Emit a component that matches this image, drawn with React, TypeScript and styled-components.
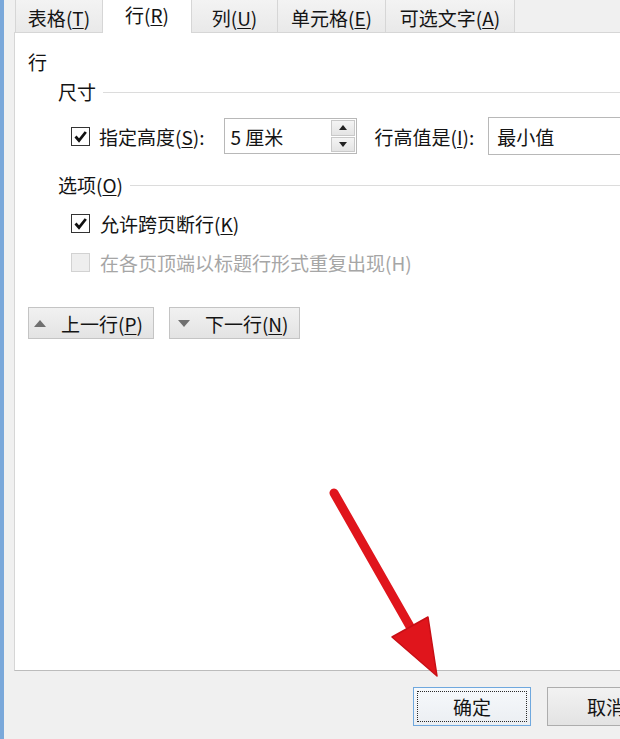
import styled, { createGlobalStyle } from 'styled-components';

const GlobalStyle = createGlobalStyle`
  html, body {
    margin: 0;
    padding: 0;
    background: #f0f0f0;
  }
  body {
    font-family: 'Noto Sans CJK SC', 'Noto Sans', sans-serif;
    color: #141414;
    overflow: hidden;
  }
  u {
    text-underline-offset: 2px;
  }
`;

const Screen = styled.div`
  position: relative;
  width: 620px;
  height: 739px;
  overflow: hidden;
  display: flex;
`;

const WindowEdge = styled.div`
  width: 4px;
  flex-shrink: 0;
  background: #7aa8da;
`;

const Dialog = styled.div`
  width: 720px;
  flex-shrink: 0;
  padding-left: 10px;
  display: flex;
  flex-direction: column;
  background: #f0f0f0;
`;

const TabStrip = styled.div`
  display: flex;
  align-items: flex-start;
  height: 32px;
  padding-left: 2px;
  position: relative;
  z-index: 2;
`;

const Tab = styled.div<{ $active?: boolean; $width: number }>`
  box-sizing: border-box;
  height: ${(p) => (p.$active ? 33 : 32)}px;
  width: ${(p) => p.$width}px;
  margin-left: -1px;
  padding-bottom: ${(p) => (p.$active ? 5 : 0)}px;
  padding-top: ${(p) => (p.$active ? 0 : 2)}px;
  display: flex;
  align-items: center;
  justify-content: center;
  font-size: 19px;
  line-height: 1;
  white-space: nowrap;
  border: 1px solid #d6d6d6;
  border-top: none;
  border-bottom: none;
  background: ${(p) => (p.$active ? '#ffffff' : 'linear-gradient(#f3f3f3, #e9e9e9)')};
`;

const Panel = styled.div`
  box-sizing: border-box;
  height: 639px;
  background: #ffffff;
  border: 1px solid #d6d6d6;
  border-bottom-color: #bcbcbc;
  border-right: none;
  padding: 17px 0 0 13px;
  display: flex;
  flex-direction: column;
  align-items: flex-start;
`;

const SectionTitle = styled.div`
  font-size: 19px;
  line-height: 24px;
`;

const GroupHeader = styled.div<{ $top: number }>`
  align-self: stretch;
  display: flex;
  align-items: center;
  gap: 7px;
  margin: ${(p) => p.$top}px 0 0 30px;
  font-size: 19px;
  line-height: 24px;

  &::after {
    content: '';
    flex: 1;
    height: 1px;
    background: #dcdcdc;
  }
`;

const SizeRow = styled.div`
  display: flex;
  align-items: center;
  height: 38px;
  margin: 13px 0 0 43px;
  font-size: 19px;
  white-space: nowrap;
`;

const CheckRow = styled.div<{ $top: number; $disabled?: boolean }>`
  display: flex;
  align-items: center;
  gap: 10px;
  height: 24px;
  margin: ${(p) => p.$top}px 0 0 43px;
  font-size: 19px;
  white-space: nowrap;
  color: ${(p) => (p.$disabled ? '#a6a6a6' : '#141414')};
`;

const Box = styled.span<{ $disabled?: boolean }>`
  box-sizing: border-box;
  width: 19px;
  height: 19px;
  flex-shrink: 0;
  display: flex;
  align-items: center;
  justify-content: center;
  border: ${(p) => (p.$disabled ? '1px solid #d2d2d2' : '1.5px solid #333333')};
  background: ${(p) => (p.$disabled ? '#eeeeee' : '#ffffff')};
`;

const FieldLabel = styled.span<{ $gap: number }>`
  margin-left: ${(p) => p.$gap}px;
`;

const SpinBox = styled.div`
  box-sizing: border-box;
  margin-left: 20px;
  width: 133px;
  height: 36px;
  display: flex;
  align-items: center;
  justify-content: space-between;
  border: 1px solid #b8b8b8;
  background: #ffffff;
  padding-left: 5px;
`;

const SpinButtons = styled.div`
  align-self: stretch;
  width: 26px;
  display: flex;
  flex-direction: column;
  gap: 1px;
  padding: 1px;
  box-sizing: border-box;
`;

const SpinButton = styled.div`
  flex: 1;
  display: flex;
  align-items: center;
  justify-content: center;
  background: linear-gradient(#f4f4f4, #e4e4e4);
  border: 1px solid #c9c9c9;
`;

const SelectBox = styled.div`
  box-sizing: border-box;
  margin-left: 14px;
  width: 200px;
  height: 38px;
  display: flex;
  align-items: center;
  padding-left: 8px;
  border: 1px solid #b8b8b8;
  background: #ffffff;
`;

const NavRow = styled.div`
  display: flex;
  gap: 15px;
  margin-top: 33px;
`;

const NavButton = styled.div<{ $pad: number }>`
  box-sizing: border-box;
  height: 32px;
  display: flex;
  align-items: center;
  gap: 15px;
  padding: 0 10px 0 ${(p) => p.$pad}px;
  font-size: 19px;
  white-space: nowrap;
  border: 1px solid #c4c4c4;
  background: linear-gradient(#f1f1f1, #e3e3e3);
`;

const Footer = styled.div`
  display: flex;
  justify-content: flex-end;
  gap: 16px;
  margin-top: 16px;
  padding-right: 69px;
`;

const DialogButton = styled.div<{ $default?: boolean }>`
  box-sizing: border-box;
  width: 118px;
  height: 39px;
  display: flex;
  align-items: center;
  justify-content: center;
  font-size: 19px;
  border: 1px solid ${(p) => (p.$default ? '#6fa8de' : '#adadad')};
  background: ${(p) => (p.$default ? 'linear-gradient(#f6f9fc, #ebeef2)' : 'linear-gradient(#f2f2f2, #e3e3e3)')};
  outline: ${(p) => (p.$default ? '1px dotted #2a2a2a' : 'none')};
  outline-offset: -5px;
`;

const Overlay = styled.svg`
  position: absolute;
  left: 0;
  top: 0;
  pointer-events: none;
`;

const Check = () => (
  <svg width="15" height="15" viewBox="0 0 15 15">
    <polyline points="2.5,7.5 6,11.5 12.8,3" fill="none" stroke="#111" strokeWidth="2.8" />
  </svg>
);

const Tri = ({ up, color, w, h }: { up: boolean; color: string; w: number; h: number }) => (
  <svg width={w} height={h} viewBox={`0 0 ${w} ${h}`}>
    <polygon points={up ? `0,${h} ${w / 2},0 ${w},${h}` : `0,0 ${w},0 ${w / 2},${h}`} fill={color} />
  </svg>
);

const tabs = [
  { label: '表格', key: 'T', width: 88 },
  { label: '行', key: 'R', width: 90, active: true },
  { label: '列', key: 'U', width: 87 },
  { label: '单元格', key: 'E', width: 109 },
  { label: '可选文字', key: 'A', width: 130 },
];

export default function App() {
  return (
    <>
      <GlobalStyle />
      <Screen>
        <WindowEdge />
        <Dialog>
          <TabStrip>
            {tabs.map((t) => (
              <Tab key={t.key} $active={t.active} $width={t.width}>
                {t.label}(<u>{t.key}</u>)
              </Tab>
            ))}
          </TabStrip>
          <Panel>
            <SectionTitle>行</SectionTitle>
            <GroupHeader $top={6}>尺寸</GroupHeader>
            <SizeRow>
              <Box>
                <Check />
              </Box>
              <FieldLabel $gap={9}>
                指定高度(<u>S</u>):
              </FieldLabel>
              <SpinBox>
                <span>5 厘米</span>
                <SpinButtons>
                  <SpinButton>
                    <Tri up color="#222" w={8} h={5} />
                  </SpinButton>
                  <SpinButton>
                    <Tri up={false} color="#222" w={8} h={5} />
                  </SpinButton>
                </SpinButtons>
              </SpinBox>
              <FieldLabel $gap={17}>
                行高值是(<u>I</u>):
              </FieldLabel>
              <SelectBox>最小值</SelectBox>
            </SizeRow>
            <GroupHeader $top={18}>
              <span>
                选项(<u>O</u>)
              </span>
            </GroupHeader>
            <CheckRow $top={14}>
              <Box>
                <Check />
              </Box>
              <span>
                允许跨页断行(<u>K</u>)
              </span>
            </CheckRow>
            <CheckRow $top={15} $disabled>
              <Box $disabled />
              <span>在各页顶端以标题行形式重复出现(H)</span>
            </CheckRow>
            <NavRow>
              <NavButton $pad={5}>
                <Tri up color="#707070" w={12} h={7} />
                <span>
                  上一行(<u>P</u>)
                </span>
              </NavButton>
              <NavButton $pad={8}>
                <Tri up={false} color="#707070" w={12} h={7} />
                <span>
                  下一行(<u>N</u>)
                </span>
              </NavButton>
            </NavRow>
          </Panel>
          <Footer>
            <DialogButton $default>确定</DialogButton>
            <DialogButton>取消</DialogButton>
          </Footer>
        </Dialog>
        <Overlay width="620" height="739" viewBox="0 0 620 739">
          <line x1="334" y1="493" x2="412" y2="630" stroke="#e0151c" strokeWidth="9" strokeLinecap="round" />
          <polygon points="437,676 392,637 428,617" fill="#e0151c" stroke="#c80f16" strokeWidth="1.5" strokeLinejoin="round" />
        </Overlay>
      </Screen>
    </>
  );
}
